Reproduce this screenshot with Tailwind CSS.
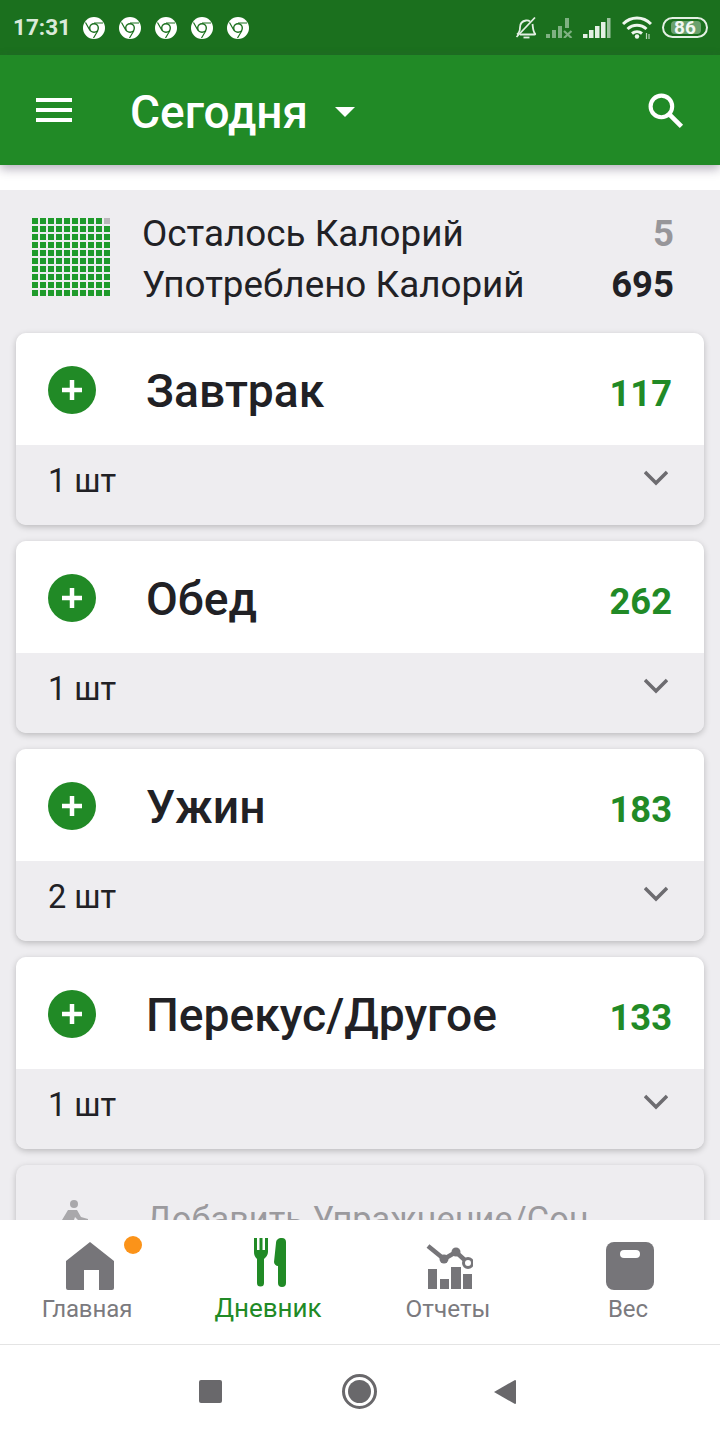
<!doctype html>
<html lang="ru">
<head>
<meta charset="utf-8">
<script src="https://cdn.jsdelivr.net/npm/@tailwindcss/browser@4"></script>
</head>
<body class="m-0">
<div class="w-[720px] h-[1440px] flex flex-col overflow-hidden bg-white font-['Roboto',sans-serif] text-[#212125]">
  <!-- status bar -->
  <div class="h-[55px] shrink-0 bg-[#1b701e] flex items-center pl-[13px] pr-[12px] text-white">
    <span class="text-[22.5px] font-bold w-[69px] text-[#d9ead9] leading-none">17:31</span>
    <div class="flex gap-[14px] ml-[1px]">
      <svg class="w-[22px] h-[22px]" viewBox="0 0 22 22"><circle cx="11" cy="11" r="11" fill="#fff"/><circle cx="11" cy="11" r="5" fill="#1b701e"/><circle cx="11" cy="11" r="3.6" fill="#fff"/><path d="M11 6H20M7 13.5L2.5 5.5M15 13.5L10.5 21" stroke="#1b701e" stroke-width="1.2"/></svg>
      <svg class="w-[22px] h-[22px]" viewBox="0 0 22 22"><circle cx="11" cy="11" r="11" fill="#fff"/><circle cx="11" cy="11" r="5" fill="#1b701e"/><circle cx="11" cy="11" r="3.6" fill="#fff"/><path d="M11 6H20M7 13.5L2.5 5.5M15 13.5L10.5 21" stroke="#1b701e" stroke-width="1.2"/></svg>
      <svg class="w-[22px] h-[22px]" viewBox="0 0 22 22"><circle cx="11" cy="11" r="11" fill="#fff"/><circle cx="11" cy="11" r="5" fill="#1b701e"/><circle cx="11" cy="11" r="3.6" fill="#fff"/><path d="M11 6H20M7 13.5L2.5 5.5M15 13.5L10.5 21" stroke="#1b701e" stroke-width="1.2"/></svg>
      <svg class="w-[22px] h-[22px]" viewBox="0 0 22 22"><circle cx="11" cy="11" r="11" fill="#fff"/><circle cx="11" cy="11" r="5" fill="#1b701e"/><circle cx="11" cy="11" r="3.6" fill="#fff"/><path d="M11 6H20M7 13.5L2.5 5.5M15 13.5L10.5 21" stroke="#1b701e" stroke-width="1.2"/></svg>
      <svg class="w-[22px] h-[22px]" viewBox="0 0 22 22"><circle cx="11" cy="11" r="11" fill="#fff"/><circle cx="11" cy="11" r="5" fill="#1b701e"/><circle cx="11" cy="11" r="3.6" fill="#fff"/><path d="M11 6H20M7 13.5L2.5 5.5M15 13.5L10.5 21" stroke="#1b701e" stroke-width="1.2"/></svg>
    </div>
    <div class="ml-auto flex items-center">
      <svg class="w-[24px] h-[24px]" viewBox="0 0 24 24" fill="none" stroke="#e4f0e4" stroke-width="1.8"><path d="M3 18.500c2-1.500 3-3.500 3-7 0-4 2.500-6.500 6-7 1.500-.2 3 .2 4 1"/><path d="M18.500 8c.5 3 .3 7 2.500 9.500 .5 .7 .2 1-.5 1H6"/><path d="M9.500 21.500h6"/><path d="M2.500 21L21 1.500"/></svg>
      <svg class="ml-[8px] w-[28px] h-[20px]" viewBox="0 0 28 20" fill="#7fb182"><rect x="0" y="16" width="4" height="4"/><rect x="6" y="12" width="4" height="8"/><rect x="12" y="8" width="4" height="12"/><rect x="19" y="0" width="4" height="10"/><path d="M18 13l7.500 7M25.500 13l-7.500 7" fill="none" stroke="#7fb182" stroke-width="2.200"/></svg>
      <svg class="ml-[9px] w-[28px] h-[20px]" viewBox="0 0 28 20" fill="#e4f0e4"><rect x="0" y="16" width="4.500" height="4"/><rect x="6" y="12" width="4.500" height="8"/><rect x="12" y="8" width="4.500" height="12"/><rect x="18" y="4" width="4.500" height="16"/><rect x="24" y="0" width="3.500" height="20" fill="#9cc39e"/></svg>
      <svg class="ml-[11px] w-[30px] h-[24px]" viewBox="0 0 30 24" fill="none" stroke="#eef6ee" stroke-width="3"><path d="M1 8c8-8 20-8 28 0"/><path d="M5.500 13c5.500-5 13.500-5 19 0"/><path d="M10 17.500c3-2.500 7-2.500 10 0"/><circle cx="15" cy="20.500" r="2.200" fill="#eef6ee" stroke="none"/><path d="M24.500 17v6M27 18v5" stroke="#b8d4b9" stroke-width="1.200"/></svg>
      <div class="ml-[10px] relative w-[46px] h-[21px] rounded-full border-2 border-[#e4f0e4] flex items-center justify-center overflow-hidden">
        <div class="absolute left-[7px] top-[2px] bottom-[2px] w-[30px] rounded-[4px] bg-[#6ba16e]"></div>
        <span class="relative text-[19px] font-bold leading-none text-[#f2f7f2]">86</span>
      </div>
    </div>
  </div>
  <!-- app bar -->
  <div class="h-[110px] shrink-0 bg-[#218a26] flex items-center text-white relative z-10 shadow-[0_4px_10px_rgba(70,60,90,0.4)]">
    <svg class="ml-[36px] w-[36px] h-[26px]" viewBox="0 0 36 26" fill="#fff"><rect y="1" width="36" height="4"/><rect y="11" width="36" height="4"/><rect y="21" width="36" height="4"/></svg>
    <span class="ml-[59px] mt-[3px] text-[46px] font-medium leading-none -translate-x-[1px]">Сегодня</span>
    <svg class="ml-[26px] mt-[3px] w-[20px] h-[10px]" viewBox="0 0 20 10" fill="#fff"><path d="M0 0h20L10 10z"/></svg>
    <svg class="ml-auto mr-[36px] w-[37px] h-[37px]" viewBox="0 0 36 36" fill="none" stroke="#fff"><circle cx="14" cy="14" r="10.500" stroke-width="4"/><path d="M22 22l11.500 11.500" stroke-width="4.500"/></svg>
  </div>
  <div class="h-[25px] shrink-0 bg-white"></div>
  <!-- content -->
  <div class="h-[1030px] shrink-0 overflow-hidden bg-[#eeedf0] px-[16px]">
    <div class="h-[143px] flex items-start relative">
      <div class="mt-[28px] ml-[16px] grid grid-cols-[repeat(10,6px)] gap-[2px] w-[78px] shrink-0">
        <span class="h-[6px] bg-[#1f9a2b]"></span><span class="h-[6px] bg-[#1f9a2b]"></span><span class="h-[6px] bg-[#1f9a2b]"></span><span class="h-[6px] bg-[#1f9a2b]"></span><span class="h-[6px] bg-[#1f9a2b]"></span><span class="h-[6px] bg-[#1f9a2b]"></span><span class="h-[6px] bg-[#1f9a2b]"></span><span class="h-[6px] bg-[#1f9a2b]"></span><span class="h-[6px] bg-[#1f9a2b]"></span><span class="h-[6px] bg-[#b9b7ba]"></span>
        <span class="h-[6px] bg-[#1f9a2b]"></span><span class="h-[6px] bg-[#1f9a2b]"></span><span class="h-[6px] bg-[#1f9a2b]"></span><span class="h-[6px] bg-[#1f9a2b]"></span><span class="h-[6px] bg-[#1f9a2b]"></span><span class="h-[6px] bg-[#1f9a2b]"></span><span class="h-[6px] bg-[#1f9a2b]"></span><span class="h-[6px] bg-[#1f9a2b]"></span><span class="h-[6px] bg-[#1f9a2b]"></span><span class="h-[6px] bg-[#1f9a2b]"></span>
        <span class="h-[6px] bg-[#1f9a2b]"></span><span class="h-[6px] bg-[#1f9a2b]"></span><span class="h-[6px] bg-[#1f9a2b]"></span><span class="h-[6px] bg-[#1f9a2b]"></span><span class="h-[6px] bg-[#1f9a2b]"></span><span class="h-[6px] bg-[#1f9a2b]"></span><span class="h-[6px] bg-[#1f9a2b]"></span><span class="h-[6px] bg-[#1f9a2b]"></span><span class="h-[6px] bg-[#1f9a2b]"></span><span class="h-[6px] bg-[#1f9a2b]"></span>
        <span class="h-[6px] bg-[#1f9a2b]"></span><span class="h-[6px] bg-[#1f9a2b]"></span><span class="h-[6px] bg-[#1f9a2b]"></span><span class="h-[6px] bg-[#1f9a2b]"></span><span class="h-[6px] bg-[#1f9a2b]"></span><span class="h-[6px] bg-[#1f9a2b]"></span><span class="h-[6px] bg-[#1f9a2b]"></span><span class="h-[6px] bg-[#1f9a2b]"></span><span class="h-[6px] bg-[#1f9a2b]"></span><span class="h-[6px] bg-[#1f9a2b]"></span>
        <span class="h-[6px] bg-[#1f9a2b]"></span><span class="h-[6px] bg-[#1f9a2b]"></span><span class="h-[6px] bg-[#1f9a2b]"></span><span class="h-[6px] bg-[#1f9a2b]"></span><span class="h-[6px] bg-[#1f9a2b]"></span><span class="h-[6px] bg-[#1f9a2b]"></span><span class="h-[6px] bg-[#1f9a2b]"></span><span class="h-[6px] bg-[#1f9a2b]"></span><span class="h-[6px] bg-[#1f9a2b]"></span><span class="h-[6px] bg-[#1f9a2b]"></span>
        <span class="h-[6px] bg-[#1f9a2b]"></span><span class="h-[6px] bg-[#1f9a2b]"></span><span class="h-[6px] bg-[#1f9a2b]"></span><span class="h-[6px] bg-[#1f9a2b]"></span><span class="h-[6px] bg-[#1f9a2b]"></span><span class="h-[6px] bg-[#1f9a2b]"></span><span class="h-[6px] bg-[#1f9a2b]"></span><span class="h-[6px] bg-[#1f9a2b]"></span><span class="h-[6px] bg-[#1f9a2b]"></span><span class="h-[6px] bg-[#1f9a2b]"></span>
        <span class="h-[6px] bg-[#1f9a2b]"></span><span class="h-[6px] bg-[#1f9a2b]"></span><span class="h-[6px] bg-[#1f9a2b]"></span><span class="h-[6px] bg-[#1f9a2b]"></span><span class="h-[6px] bg-[#1f9a2b]"></span><span class="h-[6px] bg-[#1f9a2b]"></span><span class="h-[6px] bg-[#1f9a2b]"></span><span class="h-[6px] bg-[#1f9a2b]"></span><span class="h-[6px] bg-[#1f9a2b]"></span><span class="h-[6px] bg-[#1f9a2b]"></span>
        <span class="h-[6px] bg-[#1f9a2b]"></span><span class="h-[6px] bg-[#1f9a2b]"></span><span class="h-[6px] bg-[#1f9a2b]"></span><span class="h-[6px] bg-[#1f9a2b]"></span><span class="h-[6px] bg-[#1f9a2b]"></span><span class="h-[6px] bg-[#1f9a2b]"></span><span class="h-[6px] bg-[#1f9a2b]"></span><span class="h-[6px] bg-[#1f9a2b]"></span><span class="h-[6px] bg-[#1f9a2b]"></span><span class="h-[6px] bg-[#1f9a2b]"></span>
        <span class="h-[6px] bg-[#1f9a2b]"></span><span class="h-[6px] bg-[#1f9a2b]"></span><span class="h-[6px] bg-[#1f9a2b]"></span><span class="h-[6px] bg-[#1f9a2b]"></span><span class="h-[6px] bg-[#1f9a2b]"></span><span class="h-[6px] bg-[#1f9a2b]"></span><span class="h-[6px] bg-[#1f9a2b]"></span><span class="h-[6px] bg-[#1f9a2b]"></span><span class="h-[6px] bg-[#1f9a2b]"></span><span class="h-[6px] bg-[#1f9a2b]"></span>
        <span class="h-[6px] bg-[#1f9a2b]"></span><span class="h-[6px] bg-[#1f9a2b]"></span><span class="h-[6px] bg-[#1f9a2b]"></span><span class="h-[6px] bg-[#1f9a2b]"></span><span class="h-[6px] bg-[#1f9a2b]"></span><span class="h-[6px] bg-[#1f9a2b]"></span><span class="h-[6px] bg-[#1f9a2b]"></span><span class="h-[6px] bg-[#1f9a2b]"></span><span class="h-[6px] bg-[#1f9a2b]"></span><span class="h-[6px] bg-[#1f9a2b]"></span>
      </div>
      <div class="ml-[32px] mt-[18px] text-[36.8px] leading-[51px] whitespace-nowrap">
        <div>Осталось Калорий</div>
        <div>Употреблено Калорий</div>
      </div>
      <div class="ml-auto mr-[30px] mt-[18px] text-[36.5px] leading-[51px] font-bold text-right">
        <div class="text-[#97969a]">5</div>
        <div>695</div>
      </div>
    </div>
    <div class="flex flex-col gap-[16px]">
      <!-- card -->
      <div class="h-[192px] rounded-[10px] overflow-hidden shadow-[0_2px_6px_rgba(0,0,0,0.22)] flex flex-col">
        <div class="h-[112px] bg-white flex items-start pl-[32px] pr-[32px]">
          <svg class="w-[48px] h-[48px] mt-[33px]" viewBox="0 0 48 48"><circle cx="24" cy="24" r="24" fill="#218a26"/><path d="M24 14v20M14 24h20" stroke="#fff" stroke-width="4.500"/></svg>
          <span class="ml-[50px] mt-[34px] text-[46.2px] font-medium leading-[48px]">Завтрак</span>
          <span class="ml-auto mt-[41px] text-[36.3px] font-bold leading-[40px] text-[#218a26]">117</span>
        </div>
        <div class="h-[80px] bg-[#eeedf0] flex items-start pl-[32px] pr-[36px]">
          <span class="mt-[18px] text-[32.500px] leading-[36px]">1 шт</span>
          <svg class="ml-auto mt-[25px] w-[24px] h-[16px]" viewBox="0 0 24 16" fill="none" stroke="#6d6c70" stroke-width="3.500"><path d="M1 2l11 11L23 2"/></svg>
        </div>
      </div>
      <div class="h-[192px] rounded-[10px] overflow-hidden shadow-[0_2px_6px_rgba(0,0,0,0.22)] flex flex-col">
        <div class="h-[112px] bg-white flex items-start pl-[32px] pr-[32px]">
          <svg class="w-[48px] h-[48px] mt-[33px]" viewBox="0 0 48 48"><circle cx="24" cy="24" r="24" fill="#218a26"/><path d="M24 14v20M14 24h20" stroke="#fff" stroke-width="4.500"/></svg>
          <span class="ml-[50px] mt-[34px] text-[46.2px] font-medium leading-[48px]">Обед</span>
          <span class="ml-auto mt-[41px] text-[36.3px] font-bold leading-[40px] text-[#218a26]">262</span>
        </div>
        <div class="h-[80px] bg-[#eeedf0] flex items-start pl-[32px] pr-[36px]">
          <span class="mt-[18px] text-[32.500px] leading-[36px]">1 шт</span>
          <svg class="ml-auto mt-[25px] w-[24px] h-[16px]" viewBox="0 0 24 16" fill="none" stroke="#6d6c70" stroke-width="3.500"><path d="M1 2l11 11L23 2"/></svg>
        </div>
      </div>
      <div class="h-[192px] rounded-[10px] overflow-hidden shadow-[0_2px_6px_rgba(0,0,0,0.22)] flex flex-col">
        <div class="h-[112px] bg-white flex items-start pl-[32px] pr-[32px]">
          <svg class="w-[48px] h-[48px] mt-[33px]" viewBox="0 0 48 48"><circle cx="24" cy="24" r="24" fill="#218a26"/><path d="M24 14v20M14 24h20" stroke="#fff" stroke-width="4.500"/></svg>
          <span class="ml-[50px] mt-[34px] text-[46.2px] font-medium leading-[48px]">Ужин</span>
          <span class="ml-auto mt-[41px] text-[36.3px] font-bold leading-[40px] text-[#218a26]">183</span>
        </div>
        <div class="h-[80px] bg-[#eeedf0] flex items-start pl-[32px] pr-[36px]">
          <span class="mt-[18px] text-[32.500px] leading-[36px]">2 шт</span>
          <svg class="ml-auto mt-[25px] w-[24px] h-[16px]" viewBox="0 0 24 16" fill="none" stroke="#6d6c70" stroke-width="3.500"><path d="M1 2l11 11L23 2"/></svg>
        </div>
      </div>
      <div class="h-[192px] rounded-[10px] overflow-hidden shadow-[0_2px_6px_rgba(0,0,0,0.22)] flex flex-col">
        <div class="h-[112px] bg-white flex items-start pl-[32px] pr-[32px]">
          <svg class="w-[48px] h-[48px] mt-[33px]" viewBox="0 0 48 48"><circle cx="24" cy="24" r="24" fill="#218a26"/><path d="M24 14v20M14 24h20" stroke="#fff" stroke-width="4.500"/></svg>
          <span class="ml-[50px] mt-[34px] text-[46.2px] font-medium leading-[48px]">Перекус/Другое</span>
          <span class="ml-auto mt-[41px] text-[36.3px] font-bold leading-[40px] text-[#218a26]">133</span>
        </div>
        <div class="h-[80px] bg-[#eeedf0] flex items-start pl-[32px] pr-[36px]">
          <span class="mt-[18px] text-[32.500px] leading-[36px]">1 шт</span>
          <svg class="ml-auto mt-[25px] w-[24px] h-[16px]" viewBox="0 0 24 16" fill="none" stroke="#6d6c70" stroke-width="3.500"><path d="M1 2l11 11L23 2"/></svg>
        </div>
      </div>
      <!-- exercise -->
      <div class="h-[120px] rounded-[10px] bg-[#eeedf0] shadow-[0_2px_6px_rgba(0,0,0,0.22)] flex items-start pl-[42px]">
        <svg class="w-[32px] h-[48px] mt-[33px]" viewBox="0 0 32 48" fill="#a9a8ab"><circle cx="16" cy="6" r="4"/><path d="M4 22l6-10h9l4 7 7 2v3l-9-1-4-4-2 6 5 6H4z"/></svg>
        <span class="ml-[60px] mt-[32px] text-[34.4px] leading-[44px] text-[#9b9a9e] whitespace-nowrap -translate-x-[4px]">Добавить Упражнение/Сон</span>
      </div>
    </div>
  </div>
  <!-- bottom nav -->
  <div class="h-[124px] shrink-0 bg-white grid grid-cols-4 relative z-10">
    <div class="flex flex-col items-center relative text-[#7b7a7e] -translate-x-[3px]">
      <svg class="w-[48px] h-[48px] mt-[22px] translate-x-[3px]" viewBox="0 0 48 48" fill="#767579"><path d="M24 0L48 19V46a2 2 0 0 1-2 2H33V28H18V48H2a2 2 0 0 1-2-2V19z"/></svg>
      <span class="mt-[3px] text-[24px] leading-[32px] tracking-[-0.1px]">Главная</span>
      <span class="absolute left-[127px] top-[16px] w-[18px] h-[18px] rounded-full bg-[#fb9319]"></span>
    </div>
    <div class="flex flex-col items-center text-[#218a26] -translate-x-[2px]">
      <svg class="w-[50px] h-[50px] mt-[18px]" viewBox="0 0 50 50" fill="#218a26"><path d="M11 0h3v12h2.500V0h3v12H22V0h3v14c0 3-2 5-4 7v24a3.500 3.500 0 0 1-7 0V21c-2-2-3-4-3-7z"/><path d="M33 5c0-3 2-5 6-5 2.500 0 4 1.500 4 4v41a4 4 0 0 1-8 0V28c-2 0-4-2-4-4z"/></svg>
      <span class="mt-[4px] text-[26px] leading-[32px]">Дневник</span>
    </div>
    <div class="flex flex-col items-center text-[#7b7a7e] -translate-x-[2px]">
      <svg class="w-[50px] h-[50px] mt-[21px]" viewBox="0 0 50 50"><g fill="#767579"><rect x="5" y="28" width="9" height="20"/><rect x="17" y="38" width="9" height="10"/><rect x="28" y="26" width="10" height="22"/><rect x="40" y="33" width="9" height="15"/></g><path d="M5 5l16 13 12-7 12 11" fill="none" stroke="#767579" stroke-width="4.500"/><circle cx="21" cy="18" r="4.500" fill="#767579"/><circle cx="33" cy="11" r="4.500" fill="#767579"/><circle cx="45" cy="22" r="4.500" fill="#fff" stroke="#767579" stroke-width="3"/></svg>
      <span class="mt-[2px] text-[24.300px] leading-[32px]">Отчеты</span>
    </div>
    <div class="flex flex-col items-center text-[#7b7a7e] -translate-x-[2px]">
      <svg class="w-[48px] h-[48px] mt-[22px] translate-x-[2px]" viewBox="0 0 48 48"><rect width="48" height="48" rx="8" fill="#767579"/><rect x="14" y="8" width="20" height="8" rx="4" fill="#fff"/></svg>
      <span class="mt-[3px] text-[24px] leading-[32px]">Вес</span>
    </div>
  </div>
  <!-- android nav -->
  <div class="h-[96px] shrink-0 bg-white border-t border-[#e4e4e4] flex items-center pb-[2px] relative">
    <div class="ml-[199px] w-[23px] h-[23px] rounded-[2px] bg-[#69686b]"></div>
    <div class="ml-[120px] w-[35px] h-[35px] rounded-full border-[3px] border-[#69686b] p-[3px]"><div class="w-full h-full rounded-full bg-[#69686b]"></div></div>
    <svg class="ml-[116px] w-[24px] h-[26px]" viewBox="0 0 24 26" fill="#69686b"><path d="M1 13L22 1a1 1 0 0 1 1 1v22a1 1 0 0 1-1 1z"/></svg>
  </div>
</div>
</body>
</html>
